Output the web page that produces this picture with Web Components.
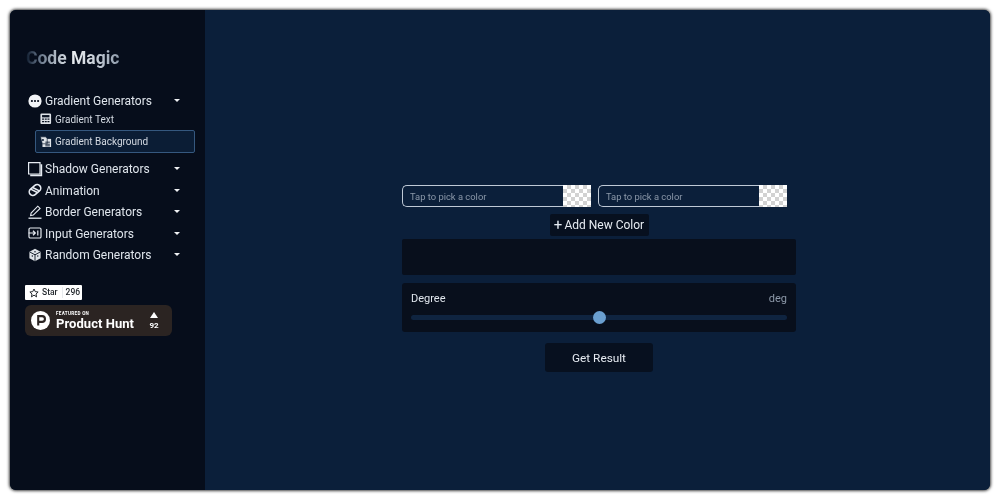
<!DOCTYPE html>
<html lang="en"><head><meta charset="utf-8"><title>Code Magic</title>
<style>
html,body{margin:0;height:100%;background:#fff}
body{font-family:Roboto,"Liberation Sans",sans-serif;color:#e6ebf2}
</style></head><body>
<app-window>
  <side-bar>
    <nav-item label="Gradient Generators" icon="dots"></nav-item>
    <sub-item label="Gradient Text" icon="calc"></sub-item>
    <sub-item label="Gradient Background" icon="bg" active></sub-item>
    <nav-item label="Shadow Generators" icon="shadow" gap></nav-item>
    <nav-item label="Animation" icon="pill"></nav-item>
    <nav-item label="Border Generators" icon="pen"></nav-item>
    <nav-item label="Input Generators" icon="input"></nav-item>
    <nav-item label="Random Generators" icon="cube"></nav-item>
  </side-bar>
  <main-panel></main-panel>
</app-window>
<script>
const ICONS={
 dots:'<circle cx="7" cy="7" r="6.6" fill="#f2f4f7"/><circle cx="3.9" cy="7" r="1.1" fill="#060d1b"/><circle cx="7" cy="7" r="1.1" fill="#060d1b"/><circle cx="10.1" cy="7" r="1.1" fill="#060d1b"/>',
 calc:'<rect x=".5" y=".5" width="13" height="13" rx="1.5" fill="#dfe3e8"/><rect x="2.5" y="2.5" width="9" height="2.8" fill="#0a1222"/><path d="M2.5 7.5h2.4M5.8 7.5h2.4M9.1 7.5h2.4M2.5 10.5h2.4M5.8 10.5h2.4M9.1 10.5h2.4" stroke="#0a1222" stroke-width="1.4"/>',
 bg:'<path d="M3 3.5h10.5v10H3z" fill="#dfe3e8"/><path d="M.5 1h6.5l1.8 2.2v6.3H2.8z" fill="#dfe3e8" stroke="#0a1a30" stroke-width=".8"/><path d="M6.5 7.5h5.5M6.5 10h5.5M6.5 12h5.5" stroke="#0a1a30" stroke-width="1.1"/><circle cx="3.6" cy="5" r="1.2" fill="#0a1a30"/>',
 shadow:'<path d="M.6 .6h11.4v11.4H.6z" fill="none" stroke="#e6ebf2" stroke-width="1.2"/><path d="M12.6 2.2H14.2V14.2H2.2V12.6H12.6z" fill="#e6ebf2"/>',
 pill:'<g transform="rotate(-40 7 7)"><rect x=".6" y="3.4" width="12.8" height="7.2" rx="3.6" fill="none" stroke="#e6ebf2" stroke-width="1.6"/><path d="M4.2 3.6l3 6.8M6.8 3.6l3 6.8" stroke="#e6ebf2" stroke-width="1.5"/></g>',
 pen:'<path d="M.5 13.2h13" stroke="#e6ebf2" stroke-width="1.3"/><path d="M2.6 10.6l.5-2.6L9.8 1.2l2.3 2.2-6.8 6.7z" fill="none" stroke="#e6ebf2" stroke-width="1.1"/>',
 input:'<rect x="1" y="2" width="12" height="10" rx="1.3" fill="none" stroke="#e6ebf2" stroke-width="1.2"/><path d="M.5 7h6.3M5 4.8 7.3 7 5 9.2M9.8 4.5v5" fill="none" stroke="#e6ebf2" stroke-width="1.2"/>',
 cube:'<path d="M7 .8l5.6 2.9v6.6L7 13.2 1.4 10.3V3.7z" fill="#dfe3e8"/><path d="M1.6 3.9 7 6.8l5.4-2.9M7 6.8v6.2" stroke="#060d1b" stroke-width=".9" fill="none"/><circle cx="4.3" cy="8" r=".7" fill="#060d1b"/><circle cx="9.8" cy="8" r=".7" fill="#060d1b"/><circle cx="7" cy="3.7" r=".7" fill="#060d1b"/>'
};
function def(name,html){
  customElements.define(name,class extends HTMLElement{
    connectedCallback(){
      if(this.shadowRoot)return;
      const r=this.attachShadow({mode:'open'});
      r.innerHTML=typeof html==='function'?html(this):html;
    }
  });
}
def('app-window',`<style>
:host{display:flex;box-sizing:border-box;position:fixed;inset:10px;border-radius:6px;overflow:hidden;box-shadow:0 0 3px 1px rgba(0,0,0,.75);background:#0b1f3a}
</style><slot></slot>`);
def('side-bar',`<style>
:host{display:flex;flex-direction:column;flex:0 0 195px;box-sizing:border-box;padding:37px 10px 0 15px;background:#060d1b}
.logo{font:700 17.5px/22px Roboto,sans-serif;white-space:nowrap;margin:0 0 21px 1px;width:96px;background:linear-gradient(90deg,#0d1a2c 0,#5d6c80 12%,#aab4c0 30%,#e8ecf0 50%,#c8cfd8 72%,#8a97a8 100%);-webkit-background-clip:text;background-clip:text;color:transparent}
.badges{display:flex;flex-direction:column;align-items:flex-start;gap:5px;margin-top:19.5px}
</style><div class="logo">Code Magic</div><slot></slot><div class="badges"><star-badge></star-badge><hunt-badge></hunt-badge></div>`);
def('nav-item',h=>`<style>
:host{display:flex;align-items:center;height:21.6px;font:400 12px/16px Roboto,sans-serif;color:#dfe5ec}
:host([gap]){margin-top:5px}
svg.i{width:14px;height:14px;margin:0 3px;flex:none;overflow:visible}
.l{flex:1;white-space:nowrap;padding-top:1px}
.c{width:0;height:0;border:3px solid transparent;border-top:3.5px solid #f0f2f5;border-bottom:0;margin-right:15px}
</style><svg class="i" viewBox="0 0 14 14">${ICONS[h.getAttribute('icon')]}</svg><span class="l">${h.getAttribute('label')}</span><span class="c"></span>`);
def('sub-item',h=>`<style>
:host{display:flex;align-items:center;box-sizing:border-box;margin-left:10px;padding-left:5px;font:400 10px/14px Roboto,sans-serif;color:#d4dae2}
:host([active]){border:1px solid #35587f;border-radius:2px;background:#0b1d35;height:23px;padding-left:4px}
:host(:not([active])){height:18px;margin-top:-2px;margin-bottom:2.2px}
svg{width:11.5px;height:11.5px;margin-right:3.5px;flex:none}
span{padding-top:2px}
</style><svg viewBox="0 0 14 14">${ICONS[h.getAttribute('icon')]}</svg><span>${h.getAttribute('label')}</span>`);
def('star-badge',`<style>
:host{display:flex;align-items:center;box-sizing:border-box;width:57px;height:15px;background:#fff;border-radius:1px;color:#24292e;font:500 8.5px/15px Roboto,sans-serif;padding-left:4px}
svg{width:10px;height:10px;margin-right:3px}
.n{margin-left:4px;padding-left:3px;border-left:1px solid #e8ebee;line-height:11px}
</style><svg viewBox="0 0 16 16"><path d="M8 1.6l2 4.2 4.6.6-3.4 3.2.9 4.6L8 11.4l-4.1 2.8.9-4.6L1.4 6.4 6 5.8z" fill="none" stroke="#24292e" stroke-width="1.6"/></svg><span>Star</span><span class="n">296</span>`);
def('hunt-badge',`<style>
:host{display:flex;align-items:center;box-sizing:border-box;width:147px;height:31px;background:#2b2422;border-radius:6px;color:#fff;padding-left:6px}
svg{width:19px;height:19px;flex:none;margin-right:6px}
.t{flex:1;display:flex;flex-direction:column}
.s{font:700 4.6px/6px Roboto,sans-serif;letter-spacing:.3px}
.b{font:700 13px/13px Roboto,sans-serif;letter-spacing:.05px}
.v{display:flex;flex-direction:column;align-items:center;width:12px;margin-right:12px;font:700 8px/9px Roboto,sans-serif}
.a{width:0;height:0;border:4px solid transparent;border-bottom:6px solid #fff;border-top:0;margin-bottom:3px}
</style><svg viewBox="0 0 20 20"><circle cx="10" cy="10" r="10" fill="#fff"/><path d="M7.6 15.2V5.4h4.1a3 3 0 0 1 0 6H7.6" fill="none" stroke="#2b2422" stroke-width="2.2"/></svg><div class="t"><span class="s">FEATURED ON</span><span class="b">Product Hunt</span></div><div class="v"><span class="a"></span><span>92</span></div>`);
def('color-pick',`<style>
:host{display:flex;width:189px;height:22px}
.f{flex:1;box-sizing:border-box;border:1px solid #bfc9d6;border-right:0;border-radius:5px 0 0 5px;background:#0b1f3a;color:#8b98a9;font:400 9.4px/21px Roboto,sans-serif;padding-left:7px;white-space:nowrap}
.k{width:28px;background:conic-gradient(#d2d2d2 25%,#fff 0 50%,#d2d2d2 0 75%,#fff 0) 0 0/8px 8px}
</style><div class="f">Tap to pick a color</div><div class="k"></div>`);
def('add-btn',`<style>
:host{display:flex;align-items:center;justify-content:center;box-sizing:border-box;width:99px;height:22px;background:#07101f;border-radius:2px;color:#e6ebf2;font:400 12px/24px Roboto,sans-serif;white-space:nowrap}
b{font-weight:400;font-size:15px;margin-right:2px;line-height:22px}
</style><b>+</b>Add New Color`);
def('degree-panel',`<style>
:host{display:block;box-sizing:border-box;height:49px;background:#080f1c;border-radius:3px;padding:8px 9px 0;font:400 11px/15px Roboto,sans-serif;color:#dfe5ec}
.h{display:flex;justify-content:space-between}
.u{color:#8c98a8}
.t{position:relative;height:5px;margin-top:9px;background:#0f2440;border-radius:3px}
.d{position:absolute;left:181.5px;top:-4px;width:13px;height:13px;border-radius:50%;background:#6a9fd0}
</style><div class="h"><span>Degree</span><span class="u">deg</span></div><div class="t"><div class="d"></div></div>`);
def('main-panel',`<style>
:host{flex:1;display:flex;flex-direction:column;align-items:flex-start;box-sizing:border-box;padding:175px 0 0 197px;background:#0b1f3a}
.row{display:flex;gap:7px}
.c{display:flex;justify-content:center;width:394px}
.out{width:394px;height:36px;margin-top:3px;background:#080f1c;border-radius:2px}
degree-panel{width:394px;margin-top:8px}
.add{margin-top:7px}
.go{margin-top:11px}
.btn{width:108px;height:29px;background:#07101f;border-radius:3px;color:#e6ebf2;font:400 11.8px/31px Roboto,sans-serif;text-align:center}
</style><div class="row"><color-pick></color-pick><color-pick></color-pick></div>
<div class="c add"><add-btn></add-btn></div><div class="out"></div><degree-panel></degree-panel>
<div class="c go"><div class="btn">Get Result</div></div>`);
</script>
</body></html>
